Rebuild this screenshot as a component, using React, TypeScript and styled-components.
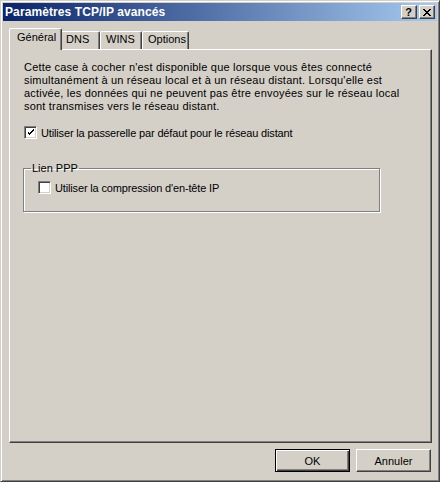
import React from "react";
import styled, { createGlobalStyle } from "styled-components";

const Global = createGlobalStyle`
  html, body { margin: 0; padding: 0; background: #d4d0c8; }
  * { box-sizing: border-box; }
  body { font-family: "Liberation Sans", Arial, sans-serif; font-size: 11px; color: #000; }
`;

const Window = styled.div`
  width: 440px;
  height: 482px;
  background: #d4d0c8;
  border: 1px solid;
  border-color: #d4d0c8 #404040 #404040 #d4d0c8;
  box-shadow: inset 1px 1px #ffffff, inset -1px -1px #808080;
  padding: 2px;
  display: flex;
  flex-direction: column;
`;

const TitleBar = styled.div`
  height: 18px;
  background: linear-gradient(to right, #0a246a, #a6caf0);
  display: flex;
  align-items: center;
  padding: 0 2px 0 2px;
`;

const Title = styled.div`
  flex: 1;
  color: #fff;
  font-weight: bold;
  font-size: 12px;
  letter-spacing: 0.1px;
`;

const CaptionButton = styled.div<{ $gap?: number }>`
  width: 16px;
  height: 14px;
  margin-left: ${(p) => p.$gap ?? 0}px;
  background: #d4d0c8;
  border: 1px solid;
  border-color: #ffffff #404040 #404040 #ffffff;
  box-shadow: inset -1px -1px #808080;
  display: flex;
  align-items: center;
  justify-content: center;
  font-weight: bold;
  font-size: 11px;
  line-height: 1;
  padding-right: 1px;
`;

const Body = styled.div`
  flex: 1;
  display: flex;
  flex-direction: column;
  padding: 7px 5px 7px 6px;
`;

const TabStrip = styled.div`
  display: flex;
  align-items: flex-end;
  height: 21px;
  padding-left: 2px;
`;

const Tab = styled.div<{ $w: number; $active?: boolean }>`
  position: relative;
  width: ${(p) => p.$w}px;
  height: ${(p) => (p.$active ? 22 : 18)}px;
  margin: 0 ${(p) => (p.$active ? -2 : 0)}px ${(p) => (p.$active ? -1 : 0)}px ${(p) => (p.$active ? -2 : 0)}px;
  z-index: ${(p) => (p.$active ? 2 : 1)};
  background: #d4d0c8;
  border-top: 1px solid #fff;
  border-left: 1px solid #fff;
  border-right: 1px solid #404040;
  border-top-left-radius: 2px;
  border-top-right-radius: 2px;
  box-shadow: inset -1px 0 #808080;
  padding: ${(p) => (p.$active ? "2px 0 0 7px" : "1px 0 0 5px")};
  white-space: nowrap;
`;

const Panel = styled.div`
  flex: 1;
  border: 1px solid;
  border-color: #ffffff #404040 #404040 #ffffff;
  box-shadow: inset -1px -1px #808080;
  padding: 11px 14px 0 14px;
  display: flex;
  flex-direction: column;
`;

const Paragraph = styled.p`
  margin: 0;
  line-height: 13px;
  letter-spacing: 0.2px;
  white-space: nowrap;
`;

const CheckRow = styled.label<{ $top: number }>`
  display: flex;
  align-items: center;
  gap: 4px;
  margin-top: ${(p) => p.$top}px;
  height: 13px;
  letter-spacing: -0.15px;
`;

const Box = styled.span`
  width: 13px;
  height: 13px;
  flex: none;
  background: #fff;
  border: 1px solid;
  border-color: #808080 #ffffff #ffffff #808080;
  box-shadow: inset 1px 1px #404040, inset -1px -1px #d4d0c8;
  display: flex;
  align-items: center;
  justify-content: center;
`;

const Group = styled.fieldset`
  margin: 23px 0 0 -1px;
  width: 357px;
  height: 50px;
  padding: 0 0 0 14px;
  border: 1px solid #808080;
  box-shadow: inset 1px 1px #ffffff, 1px 1px #ffffff;
`;

const Legend = styled.legend`
  padding: 0 1px;
  margin-left: -7px;
  line-height: 13px;
`;

const Footer = styled.div`
  display: flex;
  justify-content: flex-end;
  gap: 6px;
  margin-top: 6px;
  padding-right: 1px;
`;

const Button = styled.div<{ $default?: boolean }>`
  width: 75px;
  height: 23px;
  display: flex;
  align-items: center;
  justify-content: center;
  background: #d4d0c8;
  border: 1px solid;
  border-color: ${(p) => (p.$default ? "#000" : "#fff #404040 #404040 #fff")};
  box-shadow: ${(p) =>
    p.$default
      ? "inset 1px 1px #fff, inset -1px -1px #404040, inset -2px -2px #808080"
      : "inset -1px -1px #808080"};
`;

const Check = () => (
  <svg width="7" height="7" viewBox="0 0 7 7" shapeRendering="crispEdges">
    <path d="M0 2h1v3h1v1h1v-1h1v-1h1v-1h1v-1h1v-2h-1v1h-1v1h-1v1h-1v1h-1v-1h-1v-1h-1z" fill="#000" />
  </svg>
);

const Close = () => (
  <svg width="8" height="7" viewBox="0 0 8 7" shapeRendering="crispEdges">
    <path
      d="M0 0h2v1h1v1h2v-1h1v-1h2v1h-1v1h-1v1h-1v1h1v1h1v1h1v1h-2v-1h-1v-1h-2v1h-1v1h-2v-1h1v-1h1v-1h1v-1h-1v-1h-1v-1h-1z"
      fill="#000"
    />
  </svg>
);

export default function App() {
  return (
    <>
      <Global />
      <Window>
        <TitleBar>
          <Title>Paramètres TCP/IP avancés</Title>
          <CaptionButton>?</CaptionButton>
          <CaptionButton $gap={2}>
            <Close />
          </CaptionButton>
        </TitleBar>
        <Body>
          <TabStrip>
            <Tab $w={53} $active>Général</Tab>
            <Tab $w={40}>DNS</Tab>
            <Tab $w={42}>WINS</Tab>
            <Tab $w={47}>Options</Tab>
          </TabStrip>
          <Panel>
            <Paragraph>
              Cette case à cocher n'est disponible que lorsque vous êtes connecté
              <br />
              simultanément à un réseau local et à un réseau distant. Lorsqu'elle est
              <br />
              activée, les données qui ne peuvent pas être envoyées sur le réseau local
              <br />
              sont transmises vers le réseau distant.
            </Paragraph>
            <CheckRow $top={13}>
              <Box>
                <Check />
              </Box>
              Utiliser la passerelle par défaut pour le réseau distant
            </CheckRow>
            <Group>
              <Legend>Lien PPP</Legend>
              <CheckRow $top={6}>
                <Box />
                Utiliser la compression d'en-tête IP
              </CheckRow>
            </Group>
          </Panel>
          <Footer>
            <Button $default>OK</Button>
            <Button>Annuler</Button>
          </Footer>
        </Body>
      </Window>
    </>
  );
}
